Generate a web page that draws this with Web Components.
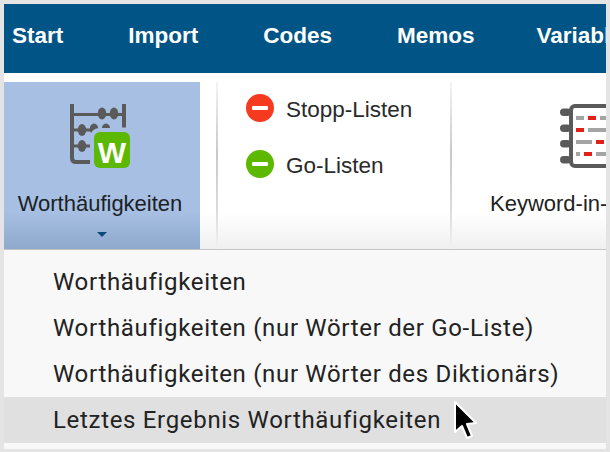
<!DOCTYPE html>
<html lang="de">
<head>
<meta charset="UTF-8">
<title>Worthäufigkeiten</title>
<style>
  html, body { margin: 0; height: 100%; background: #e4e4e4; overflow: hidden; }
  body { padding: 4px 4px 4px 4px; box-sizing: border-box; font-family: "Liberation Sans", Arial, sans-serif; }
</style>
</head>
<body>

<template id="tab-bar-template">
  <style>
    :host { display: flex; gap: 65px; height: 69px; padding: 0 0 0 8px; align-items: center; background: #015486; overflow: hidden; box-sizing: border-box; }
    ::slotted(span) { color: #fff; font: bold 22.5px "Liberation Sans", Arial, sans-serif; white-space: nowrap; position: relative; top: -3px; }
  </style>
  <slot></slot>
</template>

<template id="ribbon-bar-template">
  <style>
    :host { display: flex; height: 177px; box-sizing: border-box; padding-top: 9px; border-bottom: 1px solid #c4c4c4; background: linear-gradient(#fff 0, #fff 140px, #f0f0f0 176px); overflow: hidden; }
  </style>
  <slot></slot>
</template>

<template id="ribbon-button-template">
  <style>
    :host { display: flex; flex-direction: column; align-items: center; flex: none; box-sizing: border-box; height: 167px; padding-top: 13px; color: #222; font: 22px "Liberation Sans", Arial, sans-serif; }
    :host([active]) { background: linear-gradient(#a6bfe2 0, #a6bfe2 130px, #8fa9cd 167px); color: #1c1f26; }
    .icon { height: 72px; display: flex; }
    .label { margin-top: 25px; line-height: 24px; white-space: nowrap; }
    :host([active]) .label { margin-right: 4px; }
    .caret { display: none; margin-top: 16px; width: 0; height: 0; border: 5px solid transparent; border-top: 5px solid #0d4a7c; border-bottom: 0; }
    :host([active]) .caret { display: block; }
  </style>
  <div class="icon"><slot name="icon"></slot></div>
  <div class="label"><slot></slot></div>
  <div class="caret"></div>
</template>

<template id="ribbon-sep-template">
  <style>
    :host { display: block; flex: none; width: 2px; height: 167px; background: linear-gradient(#f4f4f4 0, #c9c9c9 70px, #dcdcdc 130px, #f2f2f2 167px); }
  </style>
</template>

<template id="list-group-template">
  <style>
    :host { display: flex; flex-direction: column; flex: none; box-sizing: border-box; width: 232px; padding: 12px 0 0 28px; gap: 28px; }
  </style>
  <slot></slot>
</template>

<template id="list-item-template">
  <style>
    :host { display: flex; align-items: center; gap: 12px; height: 28px; color: #2a2a2a; font: 22.5px "Liberation Sans", Arial, sans-serif; white-space: nowrap; }
    .dot { width: 28px; height: 28px; border-radius: 50%; background: var(--dot, #f53a20); display: flex; align-items: center; justify-content: center; flex: none; }
    .dot::before { content: ""; width: 16px; height: 4px; background: #fff; border-radius: 1px; }
    .text { position: relative; top: 2px; }
  </style>
  <div class="dot"></div><span class="text"><slot></slot></span>
</template>

<template id="drop-menu-template">
  <style>
    :host { display: block; background: #f8f8f8; padding: 9px 0 6px; }
  </style>
  <slot></slot>
</template>

<template id="menu-item-template">
  <style>
    :host { display: flex; align-items: center; height: 46px; padding-left: 49px; color: #222; font: 24px Roboto, "Liberation Sans", sans-serif; letter-spacing: .68px; white-space: nowrap; }
    :host([hover]) { background: #e0e0e0; }
  </style>
  <slot></slot>
</template>

<template id="mouse-cursor-template">
  <style>
    :host { position: absolute; left: 451px; top: 399px; width: 30px; height: 42px; display: block; }
    svg { display: block; overflow: visible; }
  </style>
  <svg width="30" height="42" viewBox="0 0 30 42">
    <path d="M4 3 L4 33 L11 27 L16 39 L21 37 L16 25 L25 24 Z" fill="#000" stroke="#fff" stroke-width="2" stroke-linejoin="round"/>
  </svg>
</template>

<script>
  // every element just stamps its template into an open shadow root
  function register(tag) {
    customElements.define(tag, class extends HTMLElement {
      constructor() {
        super();
        this.attachShadow({ mode: 'open' });
        const template = document.getElementById(tag + '-template');
        this.shadowRoot.appendChild(template.content.cloneNode(true));
      }
    });
  }
  ['tab-bar', 'ribbon-bar', 'ribbon-button', 'ribbon-sep', 'list-group', 'list-item',
   'drop-menu', 'menu-item', 'mouse-cursor'].forEach(register);
</script>

<tab-bar>
  <span>Start</span><span>Import</span><span>Codes</span><span>Memos</span><span style="margin-left:-3px">Variablen</span>
</tab-bar>

<ribbon-bar>
  <ribbon-button active style="width:196px">
    <svg slot="icon" width="64" height="72" viewBox="70 95 64 72" style="overflow:visible">
      <g fill="none" stroke="#5a5a5a" stroke-width="3">
        <path d="M72 104 V158 Q72 162 76 162 H90" stroke-width="4"/>
        <path d="M72 114.500 H124"/>
        <path d="M124 104 V127.500" stroke-width="4"/>
        <path d="M72 130 H100 M72 146 H96"/>
      </g>
      <g fill="#5a5a5a">
        <ellipse cx="102" cy="113.500" rx="4.200" ry="6"/>
        <ellipse cx="114" cy="113.500" rx="4.200" ry="6"/>
        <ellipse cx="82" cy="130" rx="4.200" ry="6"/>
        <ellipse cx="94" cy="129" rx="4.200" ry="5.500"/>
        <ellipse cx="106" cy="129" rx="4.200" ry="5.500"/>
        <ellipse cx="82" cy="146" rx="4.200" ry="6"/>
      </g>
      <rect x="90" y="128" width="44" height="44" rx="9" fill="#a6bfe2"/>
      <rect x="94" y="132" width="36" height="36" rx="6" fill="#5cb800"/>
      <text x="112" y="163" text-anchor="middle" fill="#fff" font-family="Liberation Sans, Arial, sans-serif" font-weight="bold" font-size="30">W</text>
    </svg>
    Worthäufigkeiten
  </ribbon-button>
  <div style="width:16px;flex:none"></div>
  <ribbon-sep></ribbon-sep>
  <list-group>
    <list-item>Stopp-Listen</list-item>
    <list-item style="--dot:#5cb800">Go-Listen</list-item>
  </list-group>
  <ribbon-sep></ribbon-sep>
  <ribbon-button style="width:200px;align-items:flex-start;padding-left:38px">
    <svg slot="icon" width="60" height="72" viewBox="556 95 60 72" style="margin-left:66px;overflow:visible">
      <rect x="571" y="106" width="60" height="60" rx="4" fill="#fff" stroke="#5a5a5a" stroke-width="4"/>
      <g fill="#5a5a5a">
        <rect x="560" y="108.500" width="11" height="7.500" rx="3.700"/>
        <rect x="560" y="124.500" width="11" height="7.500" rx="3.700"/>
        <rect x="560" y="140" width="11" height="7.500" rx="3.700"/>
        <rect x="560" y="156" width="11" height="7.500" rx="3.700"/>
      </g>
      <g fill="#a4a4a4">
        <rect x="576" y="116" width="8" height="4"/>
        <rect x="600" y="116" width="10" height="4"/>
        <rect x="588" y="128" width="22" height="4"/>
        <rect x="576" y="140" width="16" height="4"/>
        <rect x="576" y="152" width="4" height="4"/>
        <rect x="596" y="152" width="14" height="4"/>
      </g>
      <g fill="#e2201a">
        <rect x="588" y="116" width="8" height="4"/>
        <rect x="576" y="128" width="8" height="4"/>
        <rect x="596" y="140" width="8" height="4"/>
        <rect x="584" y="152" width="8" height="4"/>
      </g>
    </svg>
    Keyword-in-Context
  </ribbon-button>
</ribbon-bar>

<drop-menu>
  <menu-item>Worthäufigkeiten</menu-item>
  <menu-item>Worthäufigkeiten (nur Wörter der Go-Liste)</menu-item>
  <menu-item>Worthäufigkeiten (nur Wörter des Diktionärs)</menu-item>
  <menu-item hover>Letztes Ergebnis Worthäufigkeiten</menu-item>
</drop-menu>

<mouse-cursor></mouse-cursor>

</body>
</html>
